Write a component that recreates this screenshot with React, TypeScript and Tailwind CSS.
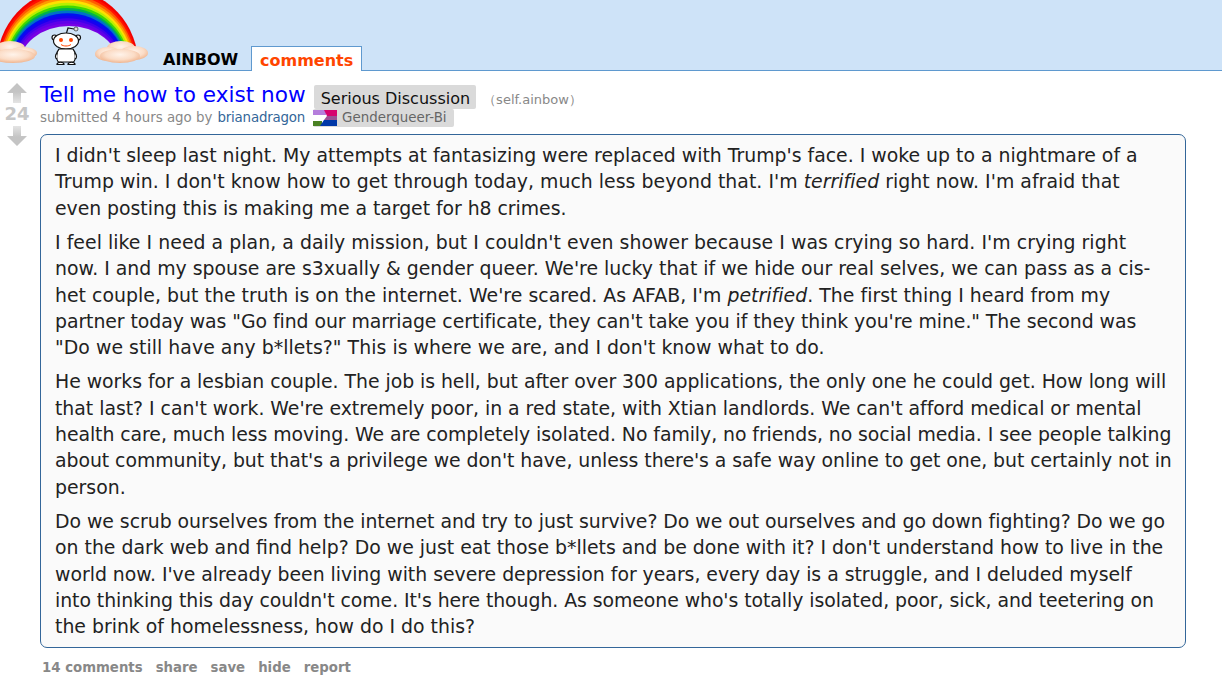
const ParaClass = "mb-[7.5px] last:mb-0 whitespace-nowrap";

const bands = [
  "#f20000", "#ff1000", "#ff5a00", "#ff9a00", "#ffe000", "#b8f000", "#40d800", "#00b050",
  "#0070c8", "#0010f0", "#1800f0", "#4000ec", "#6000e8", "#7800e4",
];

function Logo() {
  return (
    <svg width="150" height="70" viewBox="0 0 150 70" className="absolute left-0 top-0">
      <defs>
        <radialGradient id="cl" cx="0.5" cy="0.4" r="0.6">
          <stop offset="0" stopColor="#fff3ea" />
          <stop offset="0.6" stopColor="#fbdcc6" />
          <stop offset="1" stopColor="#f0b48e" />
        </radialGradient>
        <clipPath id="arch">
          <rect x="0" y="0" width="150" height="54" />
        </clipPath>
      </defs>
      <g clipPath="url(#arch)">
        {bands.map((c, i) => (
          <ellipse key={c} cx="67.500" cy="66" rx={71 - (21 * i) / 14} ry={76 - (36 * i) / 14} fill={c} />
        ))}
        <ellipse cx="69" cy="66" rx="50" ry="40" fill="#cee3f8" />
      </g>
      <g fill="url(#cl)">
        <ellipse cx="10" cy="48" rx="15" ry="7" />
        <ellipse cx="23" cy="53" rx="14" ry="6" />
        <ellipse cx="13" cy="56" rx="22" ry="7" />
        <ellipse cx="121" cy="48" rx="14" ry="7" />
        <ellipse cx="108" cy="54" rx="13" ry="7" />
        <ellipse cx="134" cy="53" rx="14" ry="7" />
        <ellipse cx="120" cy="56" rx="20" ry="7" />
      </g>
      <g stroke="#111" strokeWidth="1.2" fill="#fff">
        <path d="M66.500 33L68 28L74 29" fill="none" />
        <circle cx="76" cy="29" r="2" fill="#ddd" strokeWidth="0.6" />
        <circle cx="54.500" cy="37.500" r="2.500" />
        <circle cx="78" cy="37.500" r="2.500" />
        <ellipse cx="66" cy="41" rx="12.500" ry="8" />
        <path d="M59 49C56 52 56 60 58.500 62H73.500C76 60 76 52 73 49Z" />
        <path d="M57 53C55 55 55 58 57 59M75 53C77 55 77 58 75 59" />
        <path d="M57 64.500C57 61.500 64 61.500 64 64.500ZM68 64.500C68 61.500 75 61.500 75 64.500Z" />
      </g>
      <circle cx="61" cy="40" r="2" fill="#ff4500" />
      <circle cx="71" cy="40" r="2" fill="#ff4500" />
      <path d="M61 44.500C63.500 46.500 68.500 46.500 71 44.500" stroke="#ff4500" strokeWidth="1" fill="none" />
    </svg>
  );
}

function Arrow({ up }: { up?: boolean }) {
  const id = up ? "au" : "ad";
  return (
    <svg width="20" height="20" viewBox="0 0 20 20">
      <defs>
        <linearGradient id={id} x1="0" y1={up ? "0" : "1"} x2="0" y2={up ? "1" : "0"}>
          <stop offset="0.45" stopColor="#c4c4c4" />
          <stop offset="1" stopColor="#e4e4e4" />
        </linearGradient>
      </defs>
      <path d={up ? "M10 0L20 10H14V20H6V10H0Z" : "M6 0H14V10H20L10 20L0 10H6Z"} fill={`url(#${id})`} />
    </svg>
  );
}

export default function App() {
  return (
    <div className="w-[1222px] font-['DejaVu_Sans',sans-serif] text-[#222] bg-white">
      <header className="relative h-[71px] bg-[#cee3f8] border-b border-[#5f99cf] flex items-end">
        <Logo />
        <span className="ml-[163px] font-bold text-[16px] leading-[20px] text-black">AINBOW</span>
        <span className="ml-[13px] -mb-px h-[25px] w-[111px] bg-white border border-b-0 border-[#5f99cf] text-[#ff4500] font-bold text-[16px] leading-[27px] text-center">comments</span>
      </header>
      <main className="flex pt-[14px]">
        <div className="w-[40px] flex flex-col items-center pr-[6px] -mt-[2px]">
          <Arrow up />
          <span className="text-[#c6c6c6] font-bold text-[18px] leading-[23px] -mt-[1px] mb-[1px]">24</span>
          <Arrow />
        </div>
        <div className="w-[1146px]">
          <div className="flex items-start h-[24px]">
            <span className="text-[#0000ff] text-[21.600px] leading-[20px]">Tell me how to exist now</span>
            <span className="ml-[8px] h-[24px] pl-[7px] pr-[6px] bg-[#dadada] rounded-[2px] text-[16px] leading-[27px] text-[#111]">Serious Discussion</span>
            <span className="ml-[7px] mt-[4px] text-[#888] text-[13px] leading-[22px]">（self.ainbow）</span>
          </div>
          <div className="flex items-center h-[18px] text-[13.400px] text-[#888] leading-[20px] mb-[7px]">
            <span>submitted 4 hours ago by</span>
            <span className="ml-[5px] text-[#369] tracking-[-0.2px]">brianadragon</span>
            <span className="ml-[8px] h-[18px] flex items-center bg-[#dadada] rounded-[2px] pr-[7px] text-[#666]">
              <svg width="24" height="16" viewBox="0 0 24 16" className="mr-[5px]">
                <rect width="24" height="16" fill="#fff" />
                <rect width="13" height="5" fill="#b57edc" />
                <rect y="11" width="9" height="5" fill="#4a8123" />
                <path d="M11 0H24V6H14Z" fill="#d60270" />
                <path d="M14 6H24V10H11Z" fill="#9b4f96" />
                <path d="M11 10H24V16H7Z" fill="#0038a8" />
              </svg>
              Genderqueer-Bi
            </span>
          </div>
          <div className="border border-[#369] rounded-[7px] bg-[#fafafa] px-[14px] py-[7px] text-[18.860px] leading-[26.400px] text-[#222]">
            <p className={ParaClass}>
              I didn't sleep last night. My attempts at fantasizing were replaced with Trump's face. I woke up to a nightmare of a<br />
              <span className="tracking-[0.034px]">Trump win. I don't know how to get through today, much less beyond that. I'm <em>terrified</em> right now. I'm afraid that</span><br />
              <span className="tracking-[-0.04px]">even posting this is making me a target for h8 crimes.</span>
            </p>
            <p className={ParaClass}>
              <span className="tracking-[0.05px]">I feel like I need a plan, a daily mission, but I couldn't even shower because I was crying so hard. I'm crying right</span><br />
              now. I and my spouse are s3xually &amp; gender queer. We're lucky that if we hide our real selves, we can pass as a cis-<br />
              <span className="tracking-[0.034px]">het couple, but the truth is on the internet. We're scared. As AFAB, I'm <em>petrified</em>. The first thing I heard from my</span><br />
              <span className="tracking-[-0.06px]">partner today was "Go find our marriage certificate, they can't take you if they think you're mine." The second was</span><br />
              <span className="tracking-[0.05px]">"Do we still have any b*llets?" This is where we are, and I don't know what to do.</span>
            </p>
            <p className={ParaClass}>
              <span className="tracking-[-0.04px]">He works for a lesbian couple. The job is hell, but after over 300 applications, the only one he could get. How long will</span><br />
              <span className="tracking-[-0.025px]">that last? I can't work. We're extremely poor, in a red state, with Xtian landlords. We can't afford medical or mental</span><br />
              <span className="tracking-[-0.06px]">health care, much less moving. We are completely isolated. No family, no friends, no social media. I see people talking</span><br />
              <span className="tracking-[-0.05px]">about community, but that's a privilege we don't have, unless there's a safe way online to get one, but certainly not in</span><br />
              person.
            </p>
            <p className={ParaClass}>
              <span className="tracking-[-0.035px]">Do we scrub ourselves from the internet and try to just survive? Do we out ourselves and go down fighting? Do we go</span><br />
              on the dark web and find help? Do we just eat those b*llets and be done with it? I don't understand how to live in the<br />
              <span className="tracking-[-0.02px]">world now. I've already been living with severe depression for years, every day is a struggle, and I deluded myself</span><br />
              <span className="tracking-[-0.06px]">into thinking this day couldn't come. It's here though. As someone who's totally isolated, poor, sick, and teetering on</span><br />
              the brink of homelessness, how do I do this?
            </p>
          </div>
          <div className="flex gap-[13px] pl-[2px] pt-[11px] text-[13.300px] font-bold text-[#888] leading-[18px]">
            <span>14 comments</span><span>share</span><span>save</span><span>hide</span><span>report</span>
          </div>
        </div>
      </main>
    </div>
  );
}
